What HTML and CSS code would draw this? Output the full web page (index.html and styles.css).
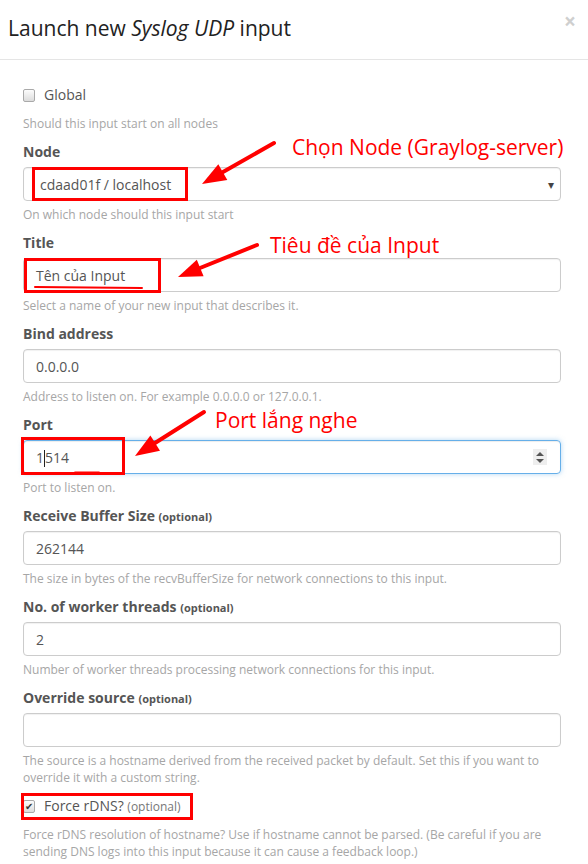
FILE: index.html
```html
<!DOCTYPE html>
<html lang="vi">
<head>
<meta charset="utf-8">
<title>Launch new Syslog UDP input</title>
<link rel="stylesheet" href="styles.css">
</head>
<body>
<div class="page">
  <div class="modal-header">
    <h4 class="modal-title">Launch new <em>Syslog UDP</em> input</h4>
    <span class="close">×</span>
  </div>
  <div class="modal-body">
    <div class="checkbox first">
      <span class="cb"></span><span class="cb-label">Global</span>
    </div>
    <div class="help">Should this input start on all nodes</div>

    <div class="label">Node</div>
    <div class="form-control select"><span>cdaad01f / localhost</span><span class="caret">▾</span></div>
    <div class="help">On which node should this input start</div>

    <div class="label">Title</div>
    <div class="form-control"><span>Tên của Input</span></div>
    <div class="help">Select a name of your new input that describes it.</div>

    <div class="label">Bind address</div>
    <div class="form-control"><span>0.0.0.0</span></div>
    <div class="help">Address to listen on. For example 0.0.0.0 or 127.0.0.1.</div>

    <div class="label">Port</div>
    <div class="form-control focus"><span>1<span class="cursor"></span>514</span><span class="spin"><svg width="14" height="15" viewBox="0 0 14 15"><path d="M7 2 L11 6 H3 Z M7 13 L11 9 H3 Z" fill="#555"/></svg></span></div>
    <div class="help">Port to listen on.</div>

    <div class="label">Receive Buffer Size <small>(optional)</small></div>
    <div class="form-control"><span>262144</span></div>
    <div class="help">The size in bytes of the recvBufferSize for network connections to this input.</div>

    <div class="label">No. of worker threads <small>(optional)</small></div>
    <div class="form-control"><span>2</span></div>
    <div class="help">Number of worker threads processing network connections for this input.</div>

    <div class="label">Override source <small>(optional)</small></div>
    <div class="form-control"><span></span></div>
    <div class="help">The source is a hostname derived from the received packet by default. Set this if you want to override it with a custom string.</div>

    <div class="checkbox second">
      <span class="cb checked">✔</span><span class="cb-label">Force rDNS? <span class="opt">(optional)</span></span>
    </div>
    <div class="help">Force rDNS resolution of hostname? Use if hostname cannot be parsed. (Be careful if you are sending DNS logs into this input because it can cause a feedback loop.)</div>
  </div>

  <div class="note-box box-node"></div>
  <div class="note-box box-title"></div>
  <div class="note-box box-port"></div>
  <div class="note-box box-rdns"></div>
  <div class="note-text text-node">Chọn Node (Graylog-server)</div>
  <div class="note-text text-title">Tiêu đề của Input</div>
  <div class="note-text text-port">Port lắng nghe</div>
  <svg class="arrows" width="588" height="864" viewBox="0 0 588 864">
    <g stroke="#f00" stroke-width="4" stroke-linecap="round" fill="none">
      <line x1="274" y1="143" x2="223" y2="172"/>
      <line x1="257" y1="245" x2="200" y2="268"/>
      <line x1="204" y1="412" x2="155" y2="443"/>
      <path d="M35 287 L142 288" stroke-width="2"/>
      <path d="M75 472.5 L99 472.5" stroke-width="2"/>
    </g>
    <g fill="#f00">
      <polygon points="202,184 227.3,179.9 218.3,164.3"/>
      <polygon points="178,277 203.6,276.3 196.8,259.7"/>
      <polygon points="135,456 160,450.7 150.4,435.5"/>
    </g>
  </svg>
</div>
</body>
</html>
```

FILE: styles.css
```css
* { box-sizing: border-box; }
html, body { margin: 0; padding: 0; background: #fff; }
body { font-family: "Open Sans", "Noto Sans", sans-serif; color: #555; }

.page {
  position: relative;
  width: 588px;
  height: 864px;
  overflow: hidden;
  background: #fff;
}

.modal-header {
  height: 60px;
  border-bottom: 1px solid #e5e5e5;
  display: flex;
  align-items: center;
  justify-content: space-between;
  padding: 0 12px 4px 8px;
}
.modal-title {
  margin: 0;
  font-size: 21px;
  font-weight: 400;
  color: #222;
  line-height: 28px;
}
.modal-title em { font-style: italic; }
.close {
  font-size: 21px;
  font-weight: 700;
  color: #cfcfcf;
  line-height: 1;
  margin-top: -12px;
}

.modal-body {
  padding: 15px 27px 0 23px;
}

.checkbox {
  display: flex;
  align-items: center;
  height: 20px;
  font-size: 14px;
  color: #555;
}
.checkbox.first { margin-top: 10px; }
.checkbox.second { margin-top: 10px; }
.cb {
  width: 12px;
  height: 13px;
  border: 1px solid #a9a9a9;
  border-radius: 2px;
  background: linear-gradient(#fcfcfc, #dcdcdc);
  margin-right: 9px;
  display: flex;
  align-items: center;
  justify-content: center;
  font-size: 10px;
  line-height: 1;
  color: #333;
}
.cb-label { line-height: 20px; height: 20px; }
.opt { font-size: 12px; color: #777; line-height: 1; }

.help {
  font-size: 12px;
  line-height: 17px;
  color: #a6a6a6;
  margin-top: 10px;
  margin-bottom: 10px;
}
.form-control + .help { margin-top: 5px; }

.label {
  font-size: 14px;
  font-weight: 700;
  line-height: 20px;
  height: 20px;
  color: #555;
  margin-bottom: 5px;
}
.label small {
  font-size: 11px;
  font-weight: 700;
  line-height: 1;
}

.form-control {
  height: 34px;
  border: 1px solid #ccc;
  border-radius: 4px;
  padding: 0 12px;
  display: flex;
  align-items: center;
  justify-content: space-between;
  font-size: 14px;
  color: #555;
  box-shadow: inset 0 1px 1px rgba(0,0,0,0.06);
}
.form-control.select { padding-left: 16px; padding-right: 6px; }
.caret { font-size: 12px; color: #444; }
.form-control.focus {
  border-color: #66afe9;
  box-shadow: inset 0 1px 1px rgba(0,0,0,0.075), 0 0 5px rgba(102,175,233,0.5);
  padding-right: 13px;
}
.cursor {
  display: inline-block;
  width: 1px;
  height: 17px;
  background: #222;
  vertical-align: -4px;
}
.spin {
  width: 14px;
  height: 16px;
  background: #eee;
  display: flex;
  align-items: center;
  justify-content: center;
}

.note-box {
  position: absolute;
  border: 3px solid #f00;
}
.box-node { left: 32px; top: 167px; width: 156px; height: 34px; }
.box-title { left: 24px; top: 258px; width: 137px; height: 35px; }
.box-port { left: 21px; top: 437px; width: 104px; height: 38px; }
.box-rdns { left: 21px; top: 793px; width: 172px; height: 27px; }

.note-text {
  position: absolute;
  color: #f00;
  font-size: 21px;
  line-height: 26px;
  white-space: nowrap;
}
.text-node { left: 292px; top: 134px; }
.text-title { left: 270px; top: 232px; }
.text-port { left: 215px; top: 407px; }

.arrows { position: absolute; left: 0; top: 0; pointer-events: none; }
```
